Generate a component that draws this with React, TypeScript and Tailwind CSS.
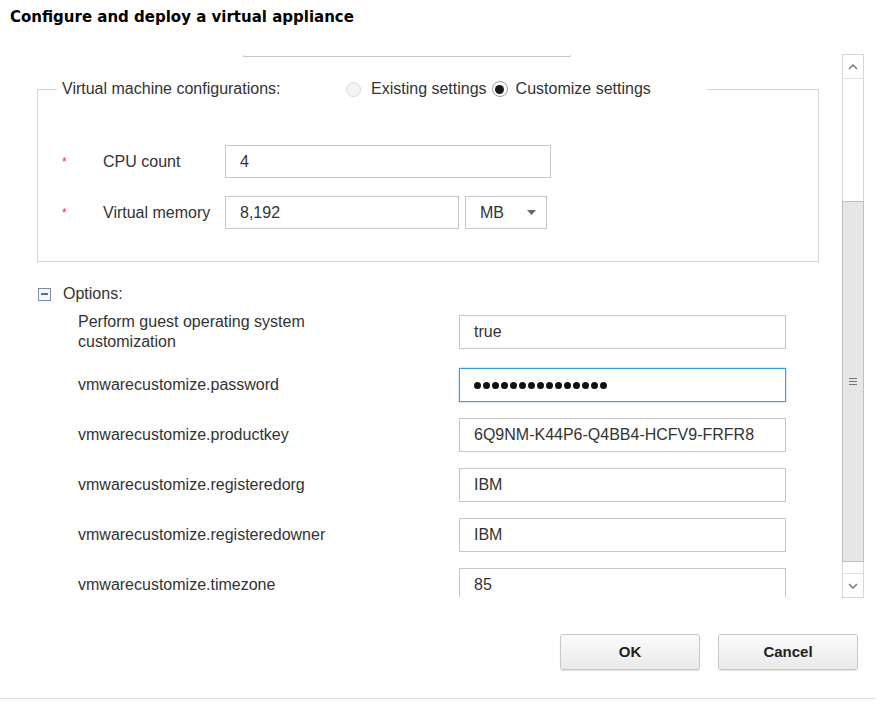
const FONT = "font-['Liberation_Sans',Arial,sans-serif]";

function Field({ value, width, focused }: { value?: string; width: string; focused?: boolean }) {
  return (
    <div
      className={`${width} h-[34px] flex items-center px-[14px] bg-white border ${
        focused ? 'border-[#3d9bd9] shadow-[0_0_2px_rgba(61,155,217,0.6)]' : 'border-[#c6c6c6]'
      } text-[16px] text-[#333]`}
    >
      {value}
    </div>
  );
}

function Chevron({ up }: { up?: boolean }) {
  return (
    <svg width="10" height="6" viewBox="0 0 10 6" className="text-[#777]">
      <polyline
        points={up ? '1,5 5,1 9,5' : '1,1 5,5 9,1'}
        fill="none"
        stroke="currentColor"
        strokeWidth="1.5"
      />
    </svg>
  );
}

function Scrollbar() {
  return (
    <div className="w-[22px] h-[544px] flex flex-col border border-[#d6d6d6] bg-white">
      <div className="h-[24px] flex items-center justify-center border-b border-[#e0e0e0]">
        <Chevron up />
      </div>
      <div className="h-[122px]" />
      <div className="h-[361px] bg-[#e6e6e6] border border-[#bfbfbf] -mx-px flex items-center justify-center">
        <div className="flex flex-col gap-[2px] w-[8px]">
          <div className="h-px bg-[#777]" />
          <div className="h-px bg-[#777]" />
          <div className="h-px bg-[#777]" />
        </div>
      </div>
      <div className="h-[11px]" />
      <div className="flex-1 flex items-center justify-center border-t border-[#e0e0e0]">
        <Chevron />
      </div>
    </div>
  );
}

function Radio({ checked }: { checked?: boolean }) {
  if (checked) {
    return (
      <div className="w-[16px] h-[16px] rounded-full border border-[#9a9a9a] bg-white flex items-center justify-center">
        <div className="w-[9px] h-[9px] rounded-full bg-[#1a1a1a]" />
      </div>
    );
  }
  return <div className="w-[15px] h-[15px] rounded-full border border-[#d8d8d8] bg-[#f4f4f4]" />;
}

const options = [
  { label: 'vmwarecustomize.password', value: '', password: true },
  { label: 'vmwarecustomize.productkey', value: '6Q9NM-K44P6-Q4BB4-HCFV9-FRFR8' },
  { label: 'vmwarecustomize.registeredorg', value: 'IBM' },
  { label: 'vmwarecustomize.registeredowner', value: 'IBM' },
  { label: 'vmwarecustomize.timezone', value: '85' },
];

export default function App() {
  return (
    <div className={`w-[878px] h-[709px] bg-white overflow-hidden ${FONT} text-[#333]`}>
      <div className="h-[54px] pt-[8px] pl-[10px]">
        <h1 className="font-['DejaVu_Sans',Verdana,sans-serif] font-bold text-[15px] leading-[18px] text-black">
          Configure and deploy a virtual appliance
        </h1>
      </div>

      <div className="flex">
        <div className="w-[842px] h-[542px] mt-px overflow-hidden">
          <div className="ml-[243px] w-[328px] h-[33px] -mt-[31px] border border-[#c6c6c6]" />

          <fieldset className="mt-[22px] ml-[37px] w-[782px] border border-[#d3d8de] pl-[19px] pb-[32px]">
            <legend className="px-[5px] pr-[56px]">
              <div className="flex items-center h-[20px] text-[16px]">
                <span className="w-[284px]">Virtual machine configurations:</span>
                <Radio />
                <span className="ml-[10px]">Existing settings</span>
                <div className="ml-[5px]">
                  <Radio checked />
                </div>
                <span className="ml-[8px]">Customize settings</span>
              </div>
            </legend>

            <div className="mt-[46px] pl-[5px] flex items-center h-[33px] text-[16px]">
              <span className="w-[41px] text-[#e33] text-[12px]">*</span>
              <span className="w-[122px]">CPU count</span>
              <div className="w-[326px] h-[33px] flex items-center px-[14px] border border-[#c6c6c6]">4</div>
            </div>
            <div className="mt-[18px] pl-[5px] flex items-center h-[33px] text-[16px]">
              <span className="w-[41px] text-[#e33] text-[12px]">*</span>
              <span className="w-[122px]">Virtual memory</span>
              <div className="w-[234px] h-[33px] flex items-center px-[14px] border border-[#c6c6c6]">8,192</div>
              <div className="ml-[6px] w-[82px] h-[33px] flex items-center justify-between pl-[14px] pr-[10px] border border-[#c6c6c6]">
                <span>MB</span>
                <svg width="9" height="5" viewBox="0 0 9 5">
                  <polygon points="0,0 9,0 4.5,5" fill="#666" />
                </svg>
              </div>
            </div>
          </fieldset>

          <div className="mt-[22px] ml-[38px] flex items-center h-[20px] text-[16px]">
            <div className="w-[13px] h-[13px] border border-[#7d8fa6] bg-[#f3f6fa] flex items-center justify-center">
              <div className="w-[7px] h-[2px] bg-[#5b6f88]" />
            </div>
            <span className="ml-[12px]">Options:</span>
          </div>

          <div className="mt-[8px] ml-[78px] text-[16px]">
            <div className="flex items-center h-[40px]">
              <div className="w-[381px]">
                <div className="w-[240px] leading-[20px]">Perform guest operating system customization</div>
              </div>
              <Field value="true" width="w-[327px]" />
            </div>
            {options.map((o) => (
              <div key={o.label} className="mt-[16px] flex items-center h-[34px]">
                <div className="w-[381px]">{o.label}</div>
                {o.password ? (
                  <div className="w-[327px] h-[34px] flex items-center gap-[2px] px-[14px] bg-white border border-[#3d9bd9] shadow-[0_0_2px_rgba(61,155,217,0.6)]">
                    {Array.from({ length: 15 }).map((_, i) => (
                      <span key={i} className="w-[7px] h-[7px] rounded-full bg-[#111]" />
                    ))}
                  </div>
                ) : (
                  <Field value={o.value} width="w-[327px]" />
                )}
              </div>
            ))}
          </div>
        </div>
        <Scrollbar />
      </div>

      <div className="mt-[36px] pr-[20px] flex justify-end gap-[18px]">
        <button className="w-[140px] h-[36px] rounded-[3px] border border-[#c8c8c8] bg-gradient-to-b from-[#fbfbfb] to-[#e9e9e9] shadow-[0_1px_1px_rgba(0,0,0,0.12)] font-bold text-[15px] text-[#222]">
          OK
        </button>
        <button className="w-[140px] h-[36px] rounded-[3px] border border-[#c8c8c8] bg-gradient-to-b from-[#fbfbfb] to-[#e9e9e9] shadow-[0_1px_1px_rgba(0,0,0,0.12)] font-bold text-[15px] text-[#222]">
          Cancel
        </button>
      </div>
      <div className="mt-[28px] w-[875px] h-px bg-[#dcdcdc]" />
    </div>
  );
}
